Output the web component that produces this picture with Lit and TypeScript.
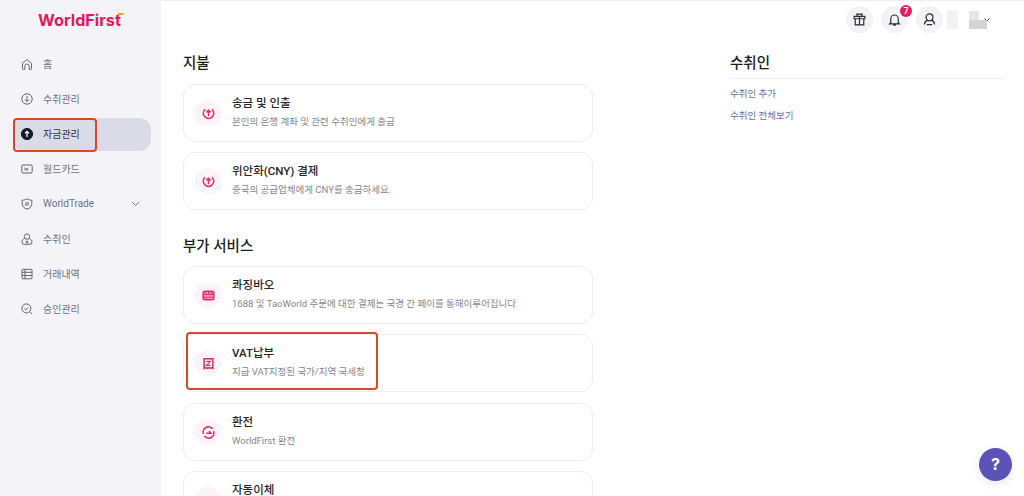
import { LitElement, html, css, svg } from "lit";
import { customElement } from "lit/decorators.js";

const navIcons: Record<string, unknown> = {
  home: svg`<path d="M2.500 6.500 7 2.500l4.500 4v5.200a.8.8 0 0 1-.8.8H9.200V9.200a2.200 2.200 0 0 0-4.400 0v3.300H3.300a.8.8 0 0 1-.8-.8z"/>`,
  receive: svg`<circle cx="7" cy="7" r="5.200"/><path d="M7 4v5.500M4.800 7.400 7 9.600l2.200-2.200"/>`,
  funds: svg`<circle cx="7" cy="7" r="5.600" fill="#15192b" stroke="#15192b"/><path d="M7 10V4.600M5 6.400 7 4.400l2 2" stroke="#fff" stroke-width="1.300"/>`,
  card: svg`<rect x="1.800" y="3" width="10.400" height="8" rx="1.200"/><path d="M4.600 5.600l.8 2.800.9-2 .9 2 .8-2.800" stroke-width=".8"/>`,
  trade: svg`<path d="M7 1.800c1.600 1 3.200 1.300 4.800 1.400v3.600c0 2.700-2 4.500-4.800 5.400-2.800-.9-4.800-2.700-4.800-5.400V3.200C3.800 3.100 5.400 2.800 7 1.800z"/><path d="M4.800 6h4l-1-1M9.200 7.800h-4l1 1" stroke-width=".9"/>`,
  payee: svg`<circle cx="7" cy="4.600" r="2.700"/><path d="M4.700 6.500C3 7.100 2 8.300 2 10a2.300 2.300 0 0 0 2.300 2.300h5.400A2.300 2.300 0 0 0 12 10c0-1.700-1-2.900-2.700-3.500M7 8.500v3M5.500 10h3"/>`,
  records: svg`<rect x="2" y="2.300" width="10" height="9.500" rx=".9"/><path d="M2 5.300h10M2 8.500h10M5 2.300v9.500"/>`,
  approve: svg`<circle cx="6.400" cy="6.400" r="4.500"/><path d="M4.500 6.400l1.400 1.400 2.400-2.500M9.700 9.700l2.500 2.500"/>`,
};

const cardIcons: Record<string, unknown> = {
  up: svg`<path d="M4.300 3.500a5.600 5.600 0 1 0 7.400 0"/><path d="M8 11V4.600M5.800 6.800 8 4.600l2.200 2.200"/>`,
  bill: svg`<rect x="2.300" y="3.500" width="11.400" height="9" rx="2" fill="#f49dbd"/><path d="M2.300 7h11.400M2.300 9.800h11.400M5 3.500v3.500M8 3.500v3.500M11 3.500v3.500" stroke-width="1"/>`,
  vat: svg`<path d="M3.300 2.800h9.400v10.400l-1.600-.9-1.500.9-1.600-.9-1.600.9-1.500-.9-1.600.9z"/><path d="M6 5.700h4L6 10h4" stroke-width="1.200"/>`,
  fx: svg`<path d="M2.700 9.500A5.500 5.500 0 0 1 12.300 4.300M13.300 6.500A5.500 5.500 0 0 1 3.700 11.700" stroke-width="1.700"/><path d="M5.500 8.800h5L8.500 6.500"/>`,
};

interface Svc { icon: string; title: string; desc: string }
const pay: Svc[] = [
  { icon: "up", title: "송금 및 인출", desc: "본인의 은행 계좌 및 관련 수취인에게 출금" },
  { icon: "up", title: "위안화(CNY) 결제", desc: "중국의 공급업체에게 CNY를 송금하세요." },
];
const extra: Svc[] = [
  { icon: "bill", title: "콰징바오", desc: "1688 및 TaoWorld 주문에 대한 결제는 국경 간 페이를 통해이루어집니다" },
  { icon: "vat", title: "VAT납부", desc: "지급 VAT지정된 국가/지역 국세청" },
  { icon: "fx", title: "환전", desc: "WorldFirst 환전" },
  { icon: "up", title: "자동이체", desc: "" },
];
const nav = [
  ["home", "홈"], ["receive", "수취관리"], ["funds", "자금관리"], ["card", "월드카드"],
  ["trade", "WorldTrade"], ["payee", "수취인"], ["records", "거래내역"], ["approve", "승인관리"],
];

@customElement("app-root")
export class AppRoot extends LitElement {
  static styles = css`
    :host {
      display: block; width: 1024px; height: 496px; overflow: hidden; position: relative;
      background: #fff; font-family: Roboto, "Noto Sans CJK KR", sans-serif; color: #1c1d22;
    }
    .page { display: flex; height: 496px; }
    .side { width: 161px; flex: none; background: #f3f3f8; box-sizing: border-box; padding: 12px 10px 0 13px; }
    .logo {
      font: 700 16.200px/16px Inter, sans-serif; color: #e0195d; padding-left: 25px; height: 17px;
      letter-spacing: 0; margin-bottom: 19px;
    }
    .logo i { font-style: normal; color: #e0195d; position: relative; }
    .logo i::after { content: ""; position: absolute; right: -2px; top: 3px; width: 5px; height: 2px; background: #f59a23; }
    .item {
      display: flex; align-items: center; height: 33px; margin-bottom: 2px; border-radius: 12px; box-sizing: border-box;
      padding: 0 0 2px 7px; font-size: 10px; color: #70727c;
    }
    .item.on { background: #d9dbe7; color: #33343c; }
    .item svg.ic { width: 14px; height: 14px; fill: none; stroke: #62646e; stroke-width: 1; margin-right: 9px; flex: none; }
    .item .chev { margin-left: auto; margin-right: 11px; width: 9px; height: 6px; fill: none; stroke: #777; stroke-width: 1; }
    .mainwrap { flex: 1; display: flex; flex-direction: column; min-width: 0; border-top: 1px solid #efeff2; }
    .top { height: 37px; flex: none; display: flex; align-items: center; padding-left: 685px; box-sizing: border-box; }
    .round {
      width: 27px; height: 27px; border-radius: 50%; background: #f3f3f6; display: flex; align-items: center;
      justify-content: center; position: relative; margin-right: 8px; flex: none;
    }
    .round svg { width: 15px; height: 15px; fill: none; stroke: #2a2b33; stroke-width: 1.100; }
    .badge {
      position: absolute; top: -1px; right: -4px; width: 12px; height: 12px; border-radius: 50%; background: #e81b5e;
      color: #fff; font-size: 9px; line-height: 12px; text-align: center; font-weight: 600;
    }
    .mask1 { width: 11px; height: 19px; background: #f2f2f2; margin-right: 11px; margin-left: -4px; flex: none; }
    .mask2 { width: 18px; height: 18px; position: relative; flex: none; }
    .mask2::before { content: ""; position: absolute; left: 0; top: 0; width: 10px; height: 9px; background: #e6e6e6; }
    .mask2::after { content: ""; position: absolute; left: 0; top: 9px; width: 18px; height: 9px; background: #d4d4d4; }
    .caret { width: 6px; height: 4px; fill: none; stroke: #444; stroke-width: 1; margin-left: -3px; flex: none; }
    .content { flex: 1; display: flex; padding-left: 22px; min-height: 0; }
    .col { width: 410px; flex: none; }
    h2 { margin: 0; font-size: 14.500px; line-height: 22px; font-weight: 500; color: #1c1d22; }
    .col h2 { margin-top: 15px; margin-bottom: 9px; }
    .col h2.second { margin-top: 26px; margin-bottom: 8px; }
    .card {
      height: 58px; box-sizing: border-box; border: 1px solid #eeeef1; border-radius: 12px; margin-bottom: 10px;
      display: flex; align-items: center; padding-left: 11px; background: #fff;
    }
    .card.g { margin-bottom: 11px; }
    .disc {
      width: 26px; height: 26px; border-radius: 50%; background: #fef4f7; display: flex; align-items: center;
      justify-content: center; margin-right: 11px; flex: none;
    }
    .disc svg { width: 15px; height: 15px; fill: none; stroke: #e3296c; stroke-width: 1.600; }
    .txt { display: flex; flex-direction: column; gap: 4px; margin-top: -2px; }
    .t { font-size: 11.500px; line-height: 16px; font-weight: 500; color: #24252b; }
    .d { font-size: 9.500px; line-height: 14px; min-height: 14px; color: #85868d; }
    .right { width: 275px; margin-left: 137px; flex: none; }
    .right h2 { margin-top: 15px; padding-bottom: 3px; border-bottom: 1px solid #f0f0f3; margin-bottom: 8px; }
    .right a { display: block; font-size: 9.500px; line-height: 14px; color: #6a6ca8; margin-bottom: 8px; }
    .help {
      position: absolute; left: 979px; top: 448px; width: 33px; height: 33px; border-radius: 50%; background: #5b53b5;
      color: #fff; font: 700 16px/33px Inter, sans-serif; text-align: center; box-shadow: 0 2px 8px rgba(91,83,181,.15);
    }
    .mark { position: absolute; border: 2px solid #d9472c; border-radius: 4px; box-sizing: border-box; }
    .mark.a { left: 13px; top: 118px; width: 84px; height: 34px; }
    .mark.b { left: 186px; top: 332px; width: 192px; height: 58px; }
  `;

  private card(s: Svc, g = false) {
    return html`<div class="card ${g ? "g" : ""}">
      <div class="disc"><svg viewBox="0 0 16 16">${cardIcons[s.icon]}</svg></div>
      <div class="txt"><div class="t">${s.title}</div><div class="d">${s.desc}</div></div>
    </div>`;
  }

  render() {
    return html`<div class="page">
        <aside class="side">
          <div class="logo">WorldFirs<i>t</i></div>
          ${nav.map(([ic, label]) => html`<div class="item ${ic === "funds" ? "on" : ""}">
            <svg class="ic" viewBox="0 0 14 14">${navIcons[ic]}</svg><span>${label}</span>
            ${ic === "trade" ? html`<svg class="chev" viewBox="0 0 9 6"><path d="M1 1l3.500 3.500L8 1"/></svg>` : ""}
          </div>`)}
        </aside>
        <div class="mainwrap">
          <header class="top">
            <div class="round"><svg viewBox="0 0 14 14"><path d="M2 4h10v2.300H2zM3 6.300V12h8V6.300M7 4v8M5 4 4.500 2h5L9 4"/></svg></div>
            <div class="round"><svg viewBox="0 0 14 14"><path d="M3.500 10V6.300a3.500 3.500 0 0 1 7 0V10l1 1h-9zM5.800 12.300h2.400"/></svg><span class="badge">7</span></div>
            <div class="round"><svg viewBox="0 0 14 14"><circle cx="7" cy="5" r="3.200"/><path d="M5.200 7.600C3.500 8.200 2.400 9.500 2.200 11.700M8.800 7.600c1.700.6 2.800 1.900 3 4.100M4.500 11.700h5"/></svg></div>
            <div class="mask1"></div><div class="mask2"></div>
            <svg class="caret" viewBox="0 0 6 4"><path d="M.5.500 3 3 5.500.5"/></svg>
          </header>
          <div class="content">
            <section class="col">
              <h2>지불</h2>
              ${pay.map((s) => this.card(s))}
              <h2 class="second">부가 서비스</h2>
              ${extra.map((s, i) => this.card(s, i === 1))}
            </section>
            <section class="right">
              <h2>수취인</h2>
              <a>수취인 추가</a>
              <a>수취인 전체보기</a>
            </section>
          </div>
        </div>
      </div>
      <div class="mark a"></div>
      <div class="mark b"></div>
      <div class="help">?</div>`;
  }
}
